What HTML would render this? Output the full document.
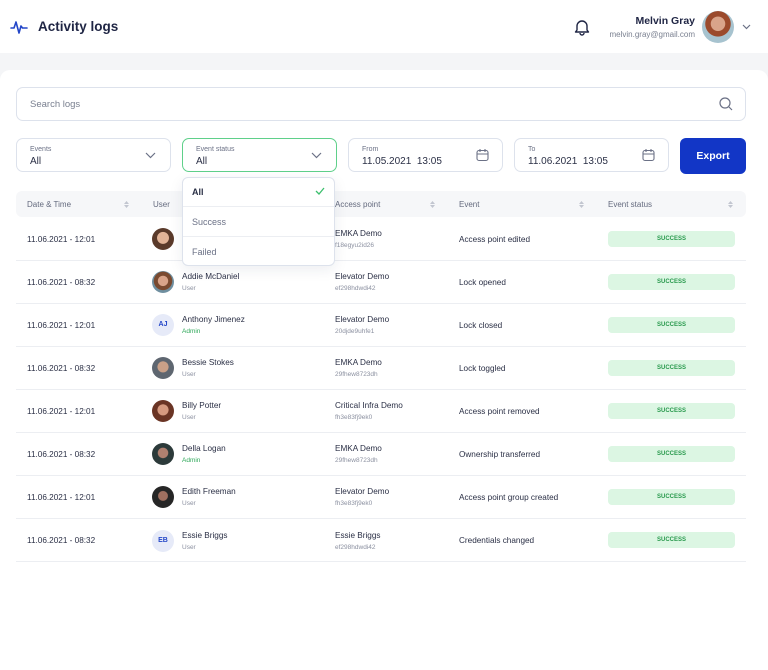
<!DOCTYPE html>
<html><head><meta charset="utf-8"><style>
*{box-sizing:border-box;margin:0;padding:0}
body{width:768px;height:649px;overflow:hidden;background:#f4f5f7;font-family:"Liberation Sans",sans-serif;color:#2a2f45;position:relative}
.a{position:absolute}
.hdr{left:0;top:0;width:768px;height:53px;background:#fff}
.card{left:0;top:70px;width:768px;height:600px;background:#fff;border-radius:10px 10px 0 0}
.box{border:1px solid #dde2ec;border-radius:7px;background:#fff}
.lbl{font-size:7px;color:#6b7186}
.val{font-size:10px;color:#2a2f45}
.th{font-size:8px;color:#646a7e}
.row{left:16px;width:730px;height:43px;border-bottom:1px solid #eceef2}
.t{font-size:8.2px;color:#2a2f45}
.s{font-size:6.5px;color:#8b90a0}
.badge{left:608px;width:127px;height:16px;background:#dcf6e3;border-radius:4px;color:#2a9a4e;font-size:6px;font-weight:bold;text-align:center;line-height:16px}
.av{left:152px;width:22px;height:22px;border-radius:50%}
.ini{background:#e6eaf8;color:#2346c8;font-size:7px;font-weight:bold;text-align:center;line-height:22px}
.sort{width:5px;height:9px}
</style></head><body>
<div class="a hdr"></div>
<svg class="a" style="left:10px;top:19px" width="18" height="16" viewBox="0 0 18 16"><path d="M1 9h3l2-6 3 11 2-7 1.5 2H17" fill="none" stroke="#2346c8" stroke-width="1.6" stroke-linejoin="round" stroke-linecap="round"/></svg>
<div class="a" style="left:38px;top:19px;font-size:13.5px;font-weight:bold;color:#1f2544">Activity logs</div>
<svg class="a" style="left:574px;top:18px" width="16" height="18" viewBox="0 0 16 18"><path d="M3 12V8a5 5 0 0 1 10 0v4l1.5 2h-13z M6 15a2 2 0 0 0 4 0" fill="none" stroke="#1f2544" stroke-width="1.4" stroke-linejoin="round"/></svg>
<div class="a" style="right:73px;top:15px;font-size:10.5px;font-weight:bold;color:#1f2544">Melvin Gray</div>
<div class="a" style="right:73px;top:30px;font-size:8px;color:#7a8090">melvin.gray@gmail.com</div>
<div class="a" style="left:702px;top:11px;width:32px;height:32px;border-radius:50%;background:radial-gradient(circle at 50% 40%,#d9a48a 0 28%,#9b4a2c 30% 50%,#a7c3cf 52%)"></div>
<svg class="a" style="left:742px;top:24px" width="9" height="6"><path d="M1 1l3.5 3.5L8 1" fill="none" stroke="#6b7186" stroke-width="1.2"/></svg>
<div class="a card"></div>
<div class="a box" style="left:16px;top:87px;width:730px;height:34px"></div>
<div class="a" style="left:30px;top:99px;font-size:9.5px;color:#7a8090">Search logs</div>
<svg class="a" style="left:719px;top:97px" width="14" height="14"><circle cx="6" cy="6" r="5" fill="none" stroke="#6b7186" stroke-width="1.2"/><path d="M10 10l3 3" stroke="#6b7186" stroke-width="1.2"/></svg>

<div class="a box" style="left:16px;top:138px;width:155px;height:34px"></div>
<div class="a lbl" style="left:30px;top:146px">Events</div><div class="a val" style="left:30px;top:156px">All</div>
<div class="a box" style="left:182px;top:138px;width:155px;height:34px;border-color:#5fd08a"></div>
<div class="a lbl" style="left:196px;top:146px">Event status</div><div class="a val" style="left:196px;top:156px">All</div>
<div class="a box" style="left:348px;top:138px;width:155px;height:34px"></div>
<div class="a lbl" style="left:362px;top:146px">From</div><div class="a val" style="left:362px;top:156px">11.05.2021&nbsp; 13:05</div>
<div class="a box" style="left:514px;top:138px;width:155px;height:34px"></div>
<div class="a lbl" style="left:528px;top:146px">To</div><div class="a val" style="left:528px;top:156px">11.06.2021&nbsp; 13:05</div>
<svg class="a" style="left:145px;top:152px" width="11" height="7"><path d="M1 1l4.5 4.5L10 1" fill="none" stroke="#6b7186" stroke-width="1.2"/></svg>
<svg class="a" style="left:311px;top:152px" width="11" height="7"><path d="M1 1l4.5 4.5L10 1" fill="none" stroke="#6b7186" stroke-width="1.2"/></svg>
<svg class="a" style="left:476px;top:148px" width="13" height="14"><rect x="1" y="2.5" width="11" height="10" rx="2" fill="none" stroke="#6b7186" stroke-width="1.1"/><path d="M1 6h11M4 1v3M9 1v3" stroke="#6b7186" stroke-width="1.1"/></svg>
<svg class="a" style="left:642px;top:148px" width="13" height="14"><rect x="1" y="2.5" width="11" height="10" rx="2" fill="none" stroke="#6b7186" stroke-width="1.1"/><path d="M1 6h11M4 1v3M9 1v3" stroke="#6b7186" stroke-width="1.1"/></svg>
<div class="a" style="left:680px;top:138px;width:66px;height:36px;background:#1236c6;border-radius:6px;color:#fff;font-size:10.5px;font-weight:bold;text-align:center;line-height:36px">Export</div>

<div class="a" style="left:16px;top:191px;width:730px;height:26px;background:#f6f7f9;border-radius:6px"></div>
<div class="a th" style="left:27px;top:200px">Date &amp; Time</div>
<div class="a th" style="left:153px;top:200px">User</div>
<div class="a th" style="left:335px;top:200px">Access point</div>
<div class="a th" style="left:459px;top:200px">Event</div>
<div class="a th" style="left:608px;top:200px">Event status</div>
<svg class="a sort" style="left:124px;top:200px" viewBox="0 0 5 9"><path d="M0 4L2.5 1 5 4zM0 5l2.5 3L5 5z" fill="#c2c6d0"/></svg>
<svg class="a sort" style="left:430px;top:200px" viewBox="0 0 5 9"><path d="M0 4L2.5 1 5 4zM0 5l2.5 3L5 5z" fill="#c2c6d0"/></svg>
<svg class="a sort" style="left:579px;top:200px" viewBox="0 0 5 9"><path d="M0 4L2.5 1 5 4zM0 5l2.5 3L5 5z" fill="#c2c6d0"/></svg>
<svg class="a sort" style="left:728px;top:200px" viewBox="0 0 5 9"><path d="M0 4L2.5 1 5 4zM0 5l2.5 3L5 5z" fill="#c2c6d0"/></svg>

<div class="a row" style="top:218px"></div><div class="a row" style="top:261px"></div><div class="a row" style="top:304px"></div><div class="a row" style="top:347px"></div><div class="a row" style="top:390px"></div><div class="a row" style="top:433px"></div><div class="a row" style="top:476px"></div><div class="a row" style="top:519px"></div>

<div class="a t" style="left:27px;top:235px">11.06.2021 - 12:01</div>
<div class="a av" style="top:228px;background:radial-gradient(circle at 50% 45%,#e2b497 0 35%,#5a3a2a 38%)"></div>
<div class="a t" style="left:335px;top:229px">EMKA Demo</div><div class="a s" style="left:335px;top:242px">f18egyu2id26</div>
<div class="a t" style="left:459px;top:235px">Access point edited</div>
<div class="a badge" style="top:231px">SUCCESS</div>

<div class="a t" style="left:27px;top:278px">11.06.2021 - 08:32</div>
<div class="a av" style="top:271px;background:radial-gradient(circle at 50% 45%,#d9a48a 0 30%,#7a4a30 33% 55%,#6f8fa0 58%)"></div>
<div class="a t" style="left:182px;top:272px">Addie McDaniel</div><div class="a s" style="left:182px;top:285px">User</div>
<div class="a t" style="left:335px;top:272px">Elevator Demo</div><div class="a s" style="left:335px;top:285px">ef298hdwdi42</div>
<div class="a t" style="left:459px;top:278px">Lock opened</div>
<div class="a badge" style="top:274px">SUCCESS</div>

<div class="a t" style="left:27px;top:321px">11.06.2021 - 12:01</div>
<div class="a av ini" style="top:314px">AJ</div>
<div class="a t" style="left:182px;top:315px">Anthony Jimenez</div><div class="a s" style="left:182px;top:328px;color:#2fa85a">Admin</div>
<div class="a t" style="left:335px;top:315px">Elevator Demo</div><div class="a s" style="left:335px;top:328px">20djde9uhfe1</div>
<div class="a t" style="left:459px;top:321px">Lock closed</div>
<div class="a badge" style="top:317px">SUCCESS</div>

<div class="a t" style="left:27px;top:364px">11.06.2021 - 08:32</div>
<div class="a av" style="top:357px;background:radial-gradient(circle at 50% 45%,#c9a088 0 32%,#5e6670 36%)"></div>
<div class="a t" style="left:182px;top:358px">Bessie Stokes</div><div class="a s" style="left:182px;top:371px">User</div>
<div class="a t" style="left:335px;top:358px">EMKA Demo</div><div class="a s" style="left:335px;top:371px">29fhew8723dh</div>
<div class="a t" style="left:459px;top:364px">Lock toggled</div>
<div class="a badge" style="top:360px">SUCCESS</div>

<div class="a t" style="left:27px;top:407px">11.06.2021 - 12:01</div>
<div class="a av" style="top:400px;background:radial-gradient(circle at 50% 45%,#d69a80 0 32%,#6a3424 36%)"></div>
<div class="a t" style="left:182px;top:401px">Billy Potter</div><div class="a s" style="left:182px;top:414px">User</div>
<div class="a t" style="left:335px;top:401px">Critical Infra Demo</div><div class="a s" style="left:335px;top:414px">fh3e83fj9ek0</div>
<div class="a t" style="left:459px;top:407px">Access point removed</div>
<div class="a badge" style="top:403px">SUCCESS</div>

<div class="a t" style="left:27px;top:450px">11.06.2021 - 08:32</div>
<div class="a av" style="top:443px;background:radial-gradient(circle at 50% 45%,#b08070 0 30%,#2c3a3a 34%)"></div>
<div class="a t" style="left:182px;top:444px">Della Logan</div><div class="a s" style="left:182px;top:457px;color:#2fa85a">Admin</div>
<div class="a t" style="left:335px;top:444px">EMKA Demo</div><div class="a s" style="left:335px;top:457px">29fhew8723dh</div>
<div class="a t" style="left:459px;top:450px">Ownership transferred</div>
<div class="a badge" style="top:446px">SUCCESS</div>

<div class="a t" style="left:27px;top:493px">11.06.2021 - 12:01</div>
<div class="a av" style="top:486px;background:radial-gradient(circle at 50% 45%,#a07060 0 28%,#262626 32%)"></div>
<div class="a t" style="left:182px;top:487px">Edith Freeman</div><div class="a s" style="left:182px;top:500px">User</div>
<div class="a t" style="left:335px;top:487px">Elevator Demo</div><div class="a s" style="left:335px;top:500px">fh3e83fj9ek0</div>
<div class="a t" style="left:459px;top:493px">Access point group created</div>
<div class="a badge" style="top:489px">SUCCESS</div>

<div class="a t" style="left:27px;top:536px">11.06.2021 - 08:32</div>
<div class="a av ini" style="top:530px">EB</div>
<div class="a t" style="left:182px;top:531px">Essie Briggs</div><div class="a s" style="left:182px;top:544px">User</div>
<div class="a t" style="left:335px;top:531px">Essie Briggs</div><div class="a s" style="left:335px;top:544px">ef298hdwdi42</div>
<div class="a t" style="left:459px;top:536px">Credentials changed</div>
<div class="a badge" style="top:532px">SUCCESS</div>

<div class="a" style="left:182px;top:177px;width:153px;height:89px;background:#fff;border:1px solid #dde2ec;border-radius:6px;box-shadow:0 4px 14px rgba(30,40,80,.08)"></div>
<div class="a" style="left:183px;top:206px;width:151px;height:1px;background:#eceef2"></div>
<div class="a" style="left:183px;top:236px;width:151px;height:1px;background:#eceef2"></div>
<div class="a" style="left:192px;top:187px;font-size:9px;font-weight:bold;color:#2a2f45">All</div>
<div class="a" style="left:192px;top:217px;font-size:9px;color:#6b7186">Success</div>
<div class="a" style="left:192px;top:247px;font-size:9px;color:#6b7186">Failed</div>
<svg class="a" style="left:315px;top:187px" width="10" height="8"><path d="M1 4l3 3 5-6" fill="none" stroke="#3cbf6d" stroke-width="1.3"/></svg>
</body></html>
